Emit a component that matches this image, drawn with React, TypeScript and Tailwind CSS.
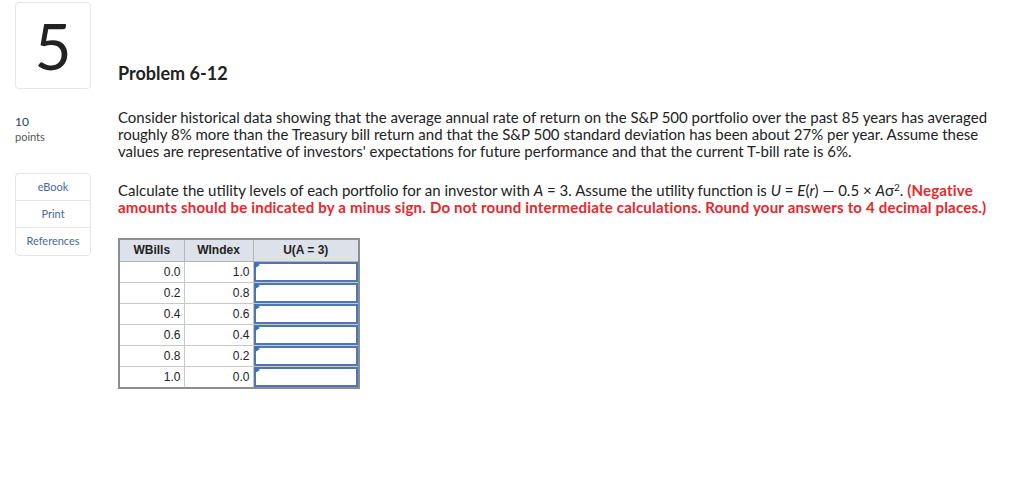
import React from "react";

const rows = [
  ["0.0", "1.0"],
  ["0.2", "0.8"],
  ["0.4", "0.6"],
  ["0.6", "0.4"],
  ["0.8", "0.2"],
  ["1.0", "0.0"],
];

const SideNav = () => (
  <div className="mt-[29px] w-[76px] rounded border border-[#e3e6ea] text-[11px] text-[#4a6a9c]">
    <div className="flex h-[27px] items-center justify-center border-b border-[#e3e6ea]">eBook</div>
    <div className="flex h-[27px] items-center justify-center border-b border-[#e3e6ea]">Print</div>
    <div className="flex h-[27px] items-center justify-center">References</div>
  </div>
);

const AnswerTable = () => (
  <table className="mt-[22px] border-collapse border-2 border-[#8d8d8d] font-['Liberation_Sans',Arial,sans-serif] text-[12px] text-[#222]">
    <thead>
      <tr className="h-[22px] bg-[#dde1e9]">
        <th className="w-[65px] border border-[#b5b5b5] font-bold">WBills</th>
        <th className="w-[69px] border border-[#b5b5b5] font-bold">WIndex</th>
        <th className="w-[106px] border border-[#b5b5b5] font-bold">U(A = 3)</th>
      </tr>
    </thead>
    <tbody>
      {rows.map(([b, i]) => (
        <tr key={b} className="h-[21px]">
          <td className="border border-[#c8c8c8] pr-[3px] text-right">{b}</td>
          <td className="border border-[#c8c8c8] pr-[3px] text-right">{i}</td>
          <td className="border border-[#c8c8c8] p-0">
            <div className="relative h-[20px] border-2 border-[#4f76b3] bg-white">
              <span className="absolute left-[-1px] top-[-2px] h-0 w-0 border-y-[3px] border-l-[5px] border-y-transparent border-l-[#3a6fc4]" />
            </div>
          </td>
        </tr>
      ))}
    </tbody>
  </table>
);

export default function App() {
  return (
    <div className="flex h-[503px] w-[1024px] bg-white font-['Lato','Open_Sans',sans-serif] text-[#222]">
      <div className="ml-[15px] mt-[2px] flex w-[76px] flex-col">
        <div className="flex h-[87px] w-[76px] items-center justify-center rounded border border-[#e5e7ea] text-[64px] font-normal leading-none text-[#222]">
          5
        </div>
        <div className="mt-[25px] text-[12px] leading-[16px] text-[#1f3c6e]">10</div>
        <div className="text-[11px] leading-[14px] text-[#555]">points</div>
        <SideNav />
      </div>
      <div className="ml-[27px] mt-[62px] w-[880px]">
        <h1 className="text-[18px] font-bold leading-[22px] text-[#222]">Problem 6-12</h1>
        <p className="mt-[25px] text-[15px] leading-[17px]">
          Consider historical data showing that the average annual rate of return on the S&amp;P 500 portfolio over the past 85 years has averaged roughly 8% more than the Treasury bill return and that the S&amp;P 500 standard deviation has been about 27% per year. Assume these values are representative of investors' expectations for future performance and that the current T-bill rate is 6%.
        </p>
        <p className="mt-[22px] text-[15px] leading-[17px]">
          Calculate the utility levels of each portfolio for an investor with <i>A</i> = 3. Assume the utility function is <i>U</i> = <i>E</i>(<i>r</i>) — 0.5 × <i>A</i>σ<sup className="text-[10px] leading-none">2</sup>.{" "}
          <span className="font-bold tracking-[0.2px] text-[#e8272c]">
            (Negative amounts should be indicated by a minus sign. Do not round intermediate calculations. Round your answers to 4 decimal places.)
          </span>
        </p>
        <AnswerTable />
      </div>
    </div>
  );
}
